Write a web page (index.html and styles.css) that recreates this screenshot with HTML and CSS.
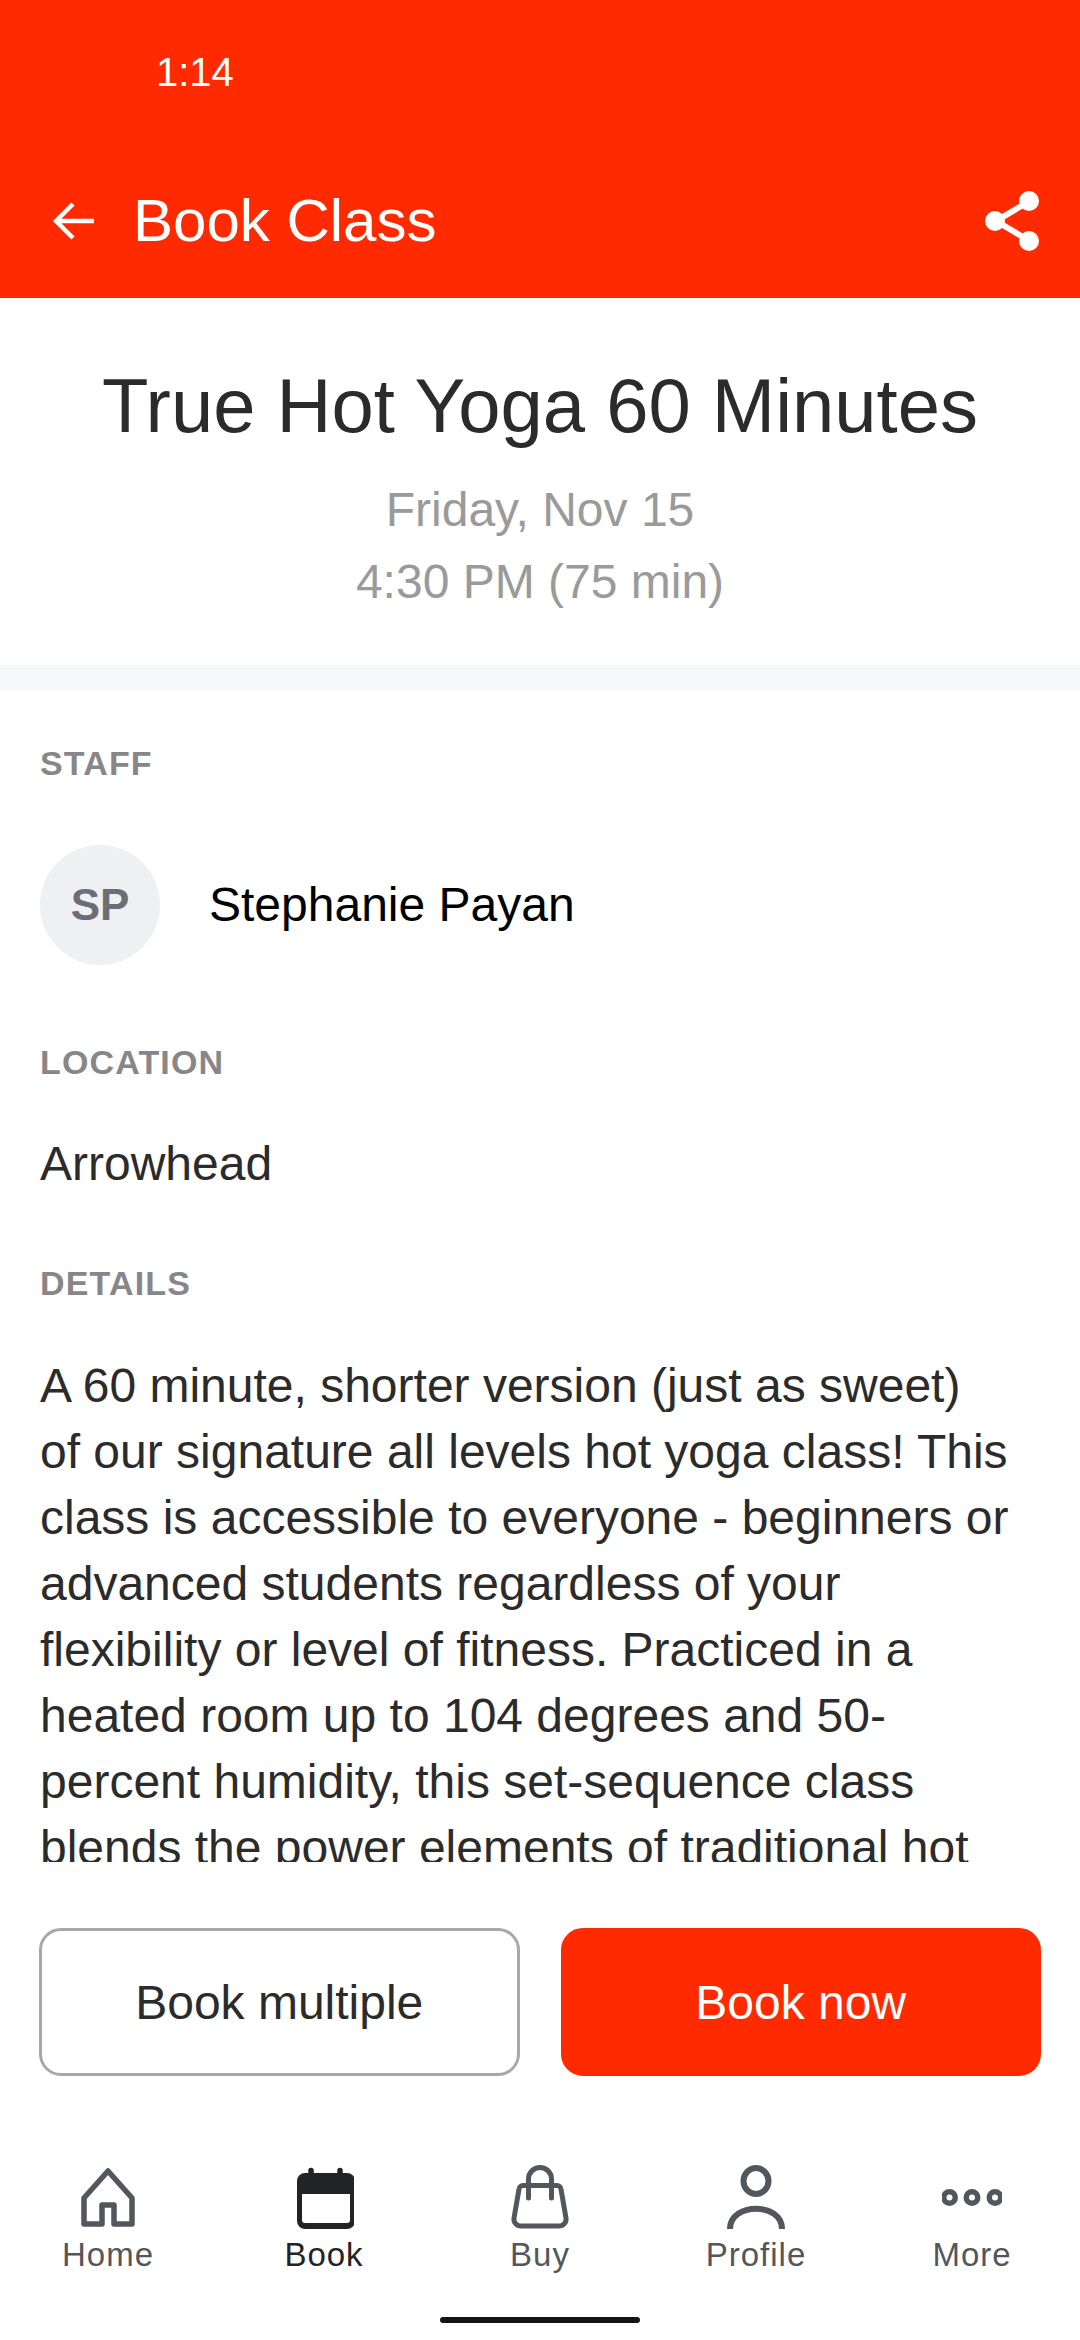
FILE: index.html
```html
<!DOCTYPE html>
<html>
<head>
<title>Book Class</title>
<link rel="stylesheet" href="styles.css">
</head>
<body>

<div class="screen">
  <div class="header">
    <div class="status-bar">1:14</div>
    <div class="app-bar">
      <svg class="back-icon" viewBox="0 0 48 48"><path d="M43 24H6M22 7L5 24l17 17" fill="none" stroke="#fff" stroke-width="4.5"/></svg>
      <div class="app-title">Book Class</div>
      <svg class="share-icon" viewBox="0 0 58 62"><path d="M45 12L13 31l32 19" fill="none" stroke="#fff" stroke-width="6"/><circle cx="46" cy="11" r="10" fill="#fff"/><circle cx="12" cy="31" r="10" fill="#fff"/><circle cx="46" cy="51" r="10" fill="#fff"/></svg>
    </div>
  </div>

  <div class="content">
    <div class="summary">
      <h1 class="class-name">True Hot Yoga 60 Minutes</h1>
      <div class="class-time">Friday, Nov 15</div>
      <div class="class-time">4:30 PM (75 min)</div>
    </div>
    <div class="divider"></div>

    <div class="section-label label-staff">STAFF</div>
    <div class="staff-row">
      <div class="avatar">SP</div>
      <div class="staff-name">Stephanie Payan</div>
    </div>

    <div class="section-label label-location">LOCATION</div>
    <div class="location">Arrowhead</div>

    <div class="section-label label-details">DETAILS</div>
    <p class="details">A 60 minute, shorter version (just as sweet)<br>of our signature all levels hot yoga class! This<br>class is accessible to everyone - beginners or<br>advanced students regardless of your<br>flexibility or level of fitness. Practiced in a<br>heated room up to 104 degrees and 50-<br>percent humidity, this set-sequence class<br>blends the power elements of traditional hot</p>
  </div>

  <div class="actions">
    <button class="btn btn-outline" type="button">Book multiple</button>
    <button class="btn btn-primary" type="button">Book now</button>
  </div>

  <div class="tabs">
    <div class="tab">
      <svg class="tab-icon" viewBox="0 0 60 64"><path d="M30 6L6 33v26h18V40h12v19h18V33z" fill="none" stroke="currentColor" stroke-width="5.5" stroke-linejoin="round"/></svg>
      <span>Home</span>
    </div>
    <div class="tab tab-active">
      <svg class="tab-icon" viewBox="-3 0 60 64"><path d="M8 8h42a8 8 0 0 1 8 8v40a8 8 0 0 1-8 8H8a8 8 0 0 1-8-8V16a8 8 0 0 1 8-8z" fill="currentColor"/><path d="M5 29h48v26a3 3 0 0 1-3 3H8a3 3 0 0 1-3-3z" fill="#fff"/><path d="M14 5.500v6M43 5.500v6" stroke="currentColor" stroke-width="5.500" stroke-linecap="round"/></svg>
      <span>Book</span>
    </div>
    <div class="tab">
      <svg class="tab-icon" viewBox="0 0 60 64"><path d="M13 20.500h34a4 4 0 0 1 4 3.600l5 29a7 7 0 0 1-7 8H11a7 7 0 0 1-7-8l5-29a4 4 0 0 1 4-3.600z" fill="none" stroke="currentColor" stroke-width="5"/><path d="M18.500 33V14a11.500 11.500 0 0 1 23 0v19" fill="none" stroke="currentColor" stroke-width="5" stroke-linecap="round"/></svg>
      <span>Buy</span>
    </div>
    <div class="tab">
      <svg class="tab-icon" viewBox="0 0 60 64"><ellipse cx="30" cy="16" rx="12.500" ry="13" fill="none" stroke="currentColor" stroke-width="6"/><path d="M4 64c0-27 52-27 52 0" fill="none" stroke="currentColor" stroke-width="6"/></svg>
      <span>Profile</span>
    </div>
    <div class="tab">
      <svg class="tab-icon" viewBox="0 0 60 64"><g fill="none" stroke="currentColor" stroke-width="5.500"><circle cx="7.500" cy="32.500" r="5.750"/><circle cx="30" cy="32.500" r="5.750"/><circle cx="53" cy="32.500" r="5.750"/></g></svg>
      <span>More</span>
    </div>
  </div>

  <div class="home-bar"><div class="home-indicator"></div></div>
</div>

</body>
</html>
```

FILE: styles.css
```css
* {
  box-sizing: border-box;
}

body {
  font-family: "Liberation Sans", Arial, sans-serif;
  margin: 0;
  padding: 0;
  background-color: #fff;
}

.screen {
  width: 1080px;
  height: 2340px;
  display: flex;
  flex-direction: column;
  overflow: hidden;
}

.header {
  background-color: #ff2a00;
  color: #fff;
  height: 298px;
  flex-shrink: 0;
}

.status-bar {
  height: 144px;
  padding: 50px 0 0 156px;
  font-size: 40px;
  line-height: 44px;
}

.app-bar {
  display: flex;
  align-items: center;
  height: 154px;
  padding: 0 39px 0 51px;
}

.back-icon {
  width: 48px;
  height: 48px;
  flex-shrink: 0;
}

.app-title {
  flex: 1;
  margin-left: 34px;
  padding-bottom: 2px;
  font-size: 60px;
}

.share-icon {
  width: 58px;
  height: 62px;
}

.content {
  flex: 1;
  min-height: 0;
  overflow: hidden;
}

.summary {
  height: 367px;
  padding-top: 65px;
  text-align: center;
}

.class-name {
  margin: 0 0 25px;
  font-size: 76px;
  font-weight: normal;
  line-height: 86px;
  color: #2b2b2b;
}

.class-time {
  font-size: 48px;
  line-height: 72px;
  color: #9a9a9a;
}

.divider {
  height: 25px;
  background-color: #f7f8f9;
}

.section-label {
  padding-left: 40px;
  font-size: 34px;
  font-weight: bold;
  line-height: 40px;
  letter-spacing: 1.15px;
  color: #87878a;
}

.label-staff {
  margin-top: 53px;
}

.staff-row {
  display: flex;
  align-items: center;
  margin-top: 62px;
  padding-left: 40px;
}

.avatar {
  width: 120px;
  height: 120px;
  border-radius: 50%;
  background-color: #eff0f2;
  color: #6b6e76;
  font-size: 44px;
  font-weight: bold;
  display: flex;
  align-items: center;
  justify-content: center;
}

.staff-name {
  margin-left: 49px;
  padding-bottom: 2px;
  font-size: 48px;
  color: #000;
}

.label-location {
  margin-top: 77px;
}

.location {
  margin-top: 54px;
  padding-left: 40px;
  font-size: 48px;
  line-height: 56px;
  color: #2b2b2b;
}

.label-details {
  margin-top: 71px;
}

.details {
  margin: 50px 0 0;
  padding: 0 40px;
  font-size: 48px;
  line-height: 66px;
  color: #2b2b2b;
  white-space: nowrap;
}

.actions {
  display: flex;
  gap: 41px;
  padding: 66px 39px 0;
  height: 278px;
  flex-shrink: 0;
}

.btn {
  flex: 1;
  height: 148px;
  border: 3px solid #a8a8a8;
  border-radius: 22px;
  font-family: inherit;
  font-size: 48px;
}

.btn-outline {
  background-color: #fff;
  color: #2b2b2b;
}

.btn-primary {
  background-color: #ff2a00;
  border-color: #ff2a00;
  color: #fff;
}

.tabs {
  display: flex;
  height: 150px;
  padding-top: 25px;
  flex-shrink: 0;
}

.tab {
  flex: 1;
  display: flex;
  flex-direction: column;
  align-items: center;
  color: #54565e;
  font-size: 33px;
  letter-spacing: 1px;
  line-height: 40px;
}

.tab-active {
  color: #222327;
}

.tab-icon {
  width: 60px;
  height: 64px;
  margin-bottom: 6px;
}

.home-bar {
  display: flex;
  justify-content: center;
  height: 50px;
  padding-top: 27px;
  flex-shrink: 0;
}

.home-indicator {
  width: 200px;
  height: 6px;
  border-radius: 3px;
  background-color: #141414;
}
```
